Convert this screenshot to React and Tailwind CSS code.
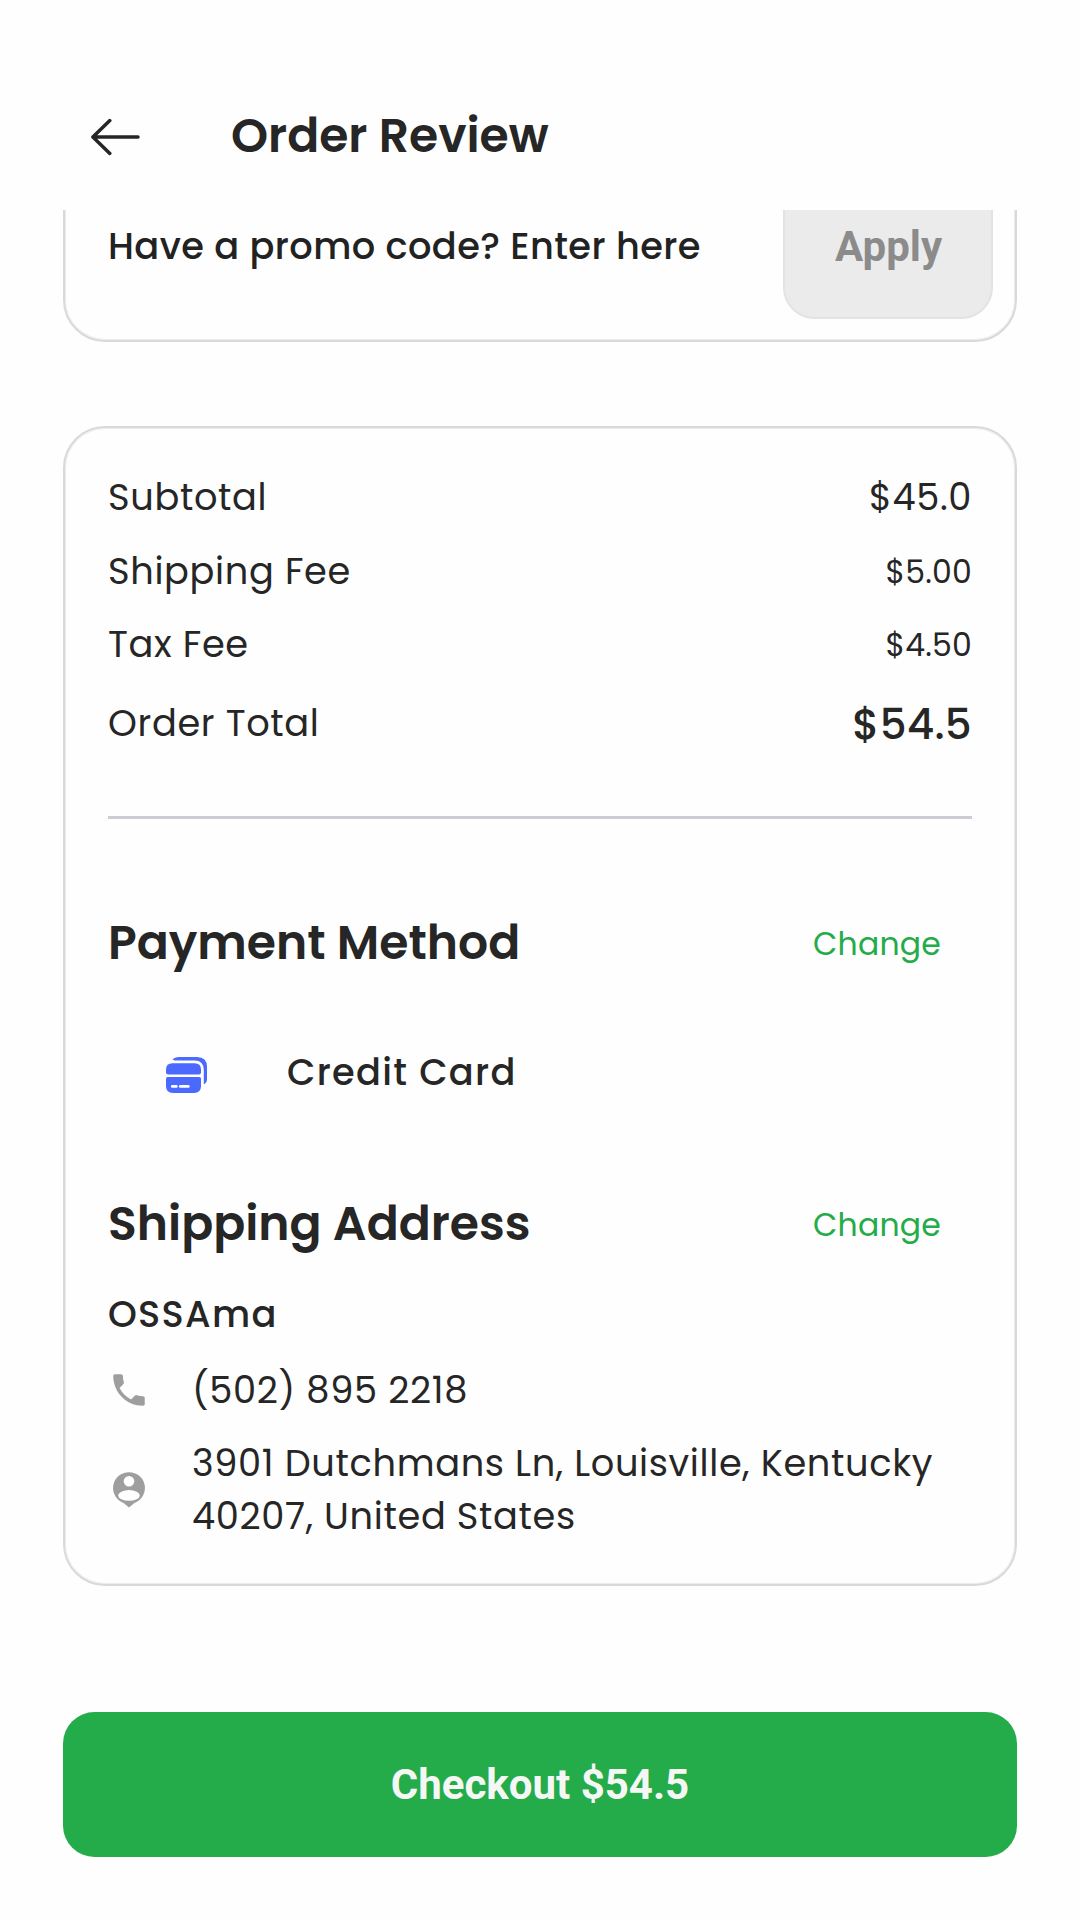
import { MdPhone } from "react-icons/md";

const fees = [
  { label: "Subtotal", value: "$45.0", row: "h-[74px]", style: "text-[36.75px] tracking-[0.65px]" },
  { label: "Shipping Fee", value: "$5.00", row: "h-[74px]", style: "text-[31.5px] tracking-[0.2px] pt-0.5" },
  { label: "Tax Fee", value: "$4.50", row: "h-[73px]", style: "text-[31.5px] tracking-[0.2px] pt-px" },
  { label: "Order Total", value: "$54.5", row: "h-[85px]", style: "text-[42px] font-medium tracking-[0.3px] pt-0.5" },
];

function ArrowLeft() {
  return (
    <svg className="h-[38px] w-[50px]" viewBox="0 0 50 38" fill="none" stroke="#262626" strokeWidth="3.5" strokeLinecap="round" strokeLinejoin="round">
      <path d="M18.8 2.6 1.9 19l16.9 16.4M2 19h45" />
    </svg>
  );
}

function CardsIcon() {
  return (
    <svg className="h-[36px] w-[41px]" viewBox="0 0 41 36" fill="#4b69ff">
      <path d="M6.5 2.8Q8.5 0 13 0H31Q41 0 41 10V22Q41 26 37.8 27.2V13Q37.8 3.4 28.5 3.4H9Q7.5 3.2 6.5 2.8Z" />
      <path d="M0 12.5Q0 6.2 6.5 6.2H28.5Q35 6.2 35 12.5V15.6Q35 17.4 33.2 17.4H1.8Q0 17.4 0 15.6Z" />
      <path d="M1.8 20H33.2Q35 20 35 21.8V29Q35 36 28 36H7Q0 36 0 29V21.8Q0 20 1.8 20Z" />
      <path d="M6.3 29.4h4M14.3 29.4h8" stroke="#fefefe" strokeWidth="2.8" strokeLinecap="round" />
    </svg>
  );
}

function PersonPinIcon() {
  return (
    <svg className="h-[36px] w-[32px]" viewBox="0 0 32 36" fill="#9e9e9e">
      <path d="M16 .2a15.8 15.8 0 0 1 5.4 30.7L16 35.4 10.6 30.9A15.8 15.8 0 0 1 16 .2Z" />
      <circle cx="16" cy="9.2" r="5.3" fill="#fefefe" />
      <ellipse cx="16" cy="23.4" rx="10.8" ry="5.3" fill="#fefefe" />
    </svg>
  );
}

function SectionHeading({ title }) {
  return (
    <div className="flex h-[81px] items-center justify-between">
      <h2 className="text-[47.25px] font-semibold">{title}</h2>
      <button className="mr-[31px] pt-1 text-[31.5px] tracking-[0.2px] text-[#24ab4a]">Change</button>
    </div>
  );
}

export default function App() {
  return (
    <div className="flex h-[1920px] w-[1080px] flex-col overflow-hidden bg-[#fefefe] font-['Poppins','Inter',sans-serif] leading-[53px] text-[#262626]">
      <header className="flex h-[210px] shrink-0 items-center pt-[61px] pl-[90.5px]">
        <div className="pt-[3px]">
          <ArrowLeft />
        </div>
        <h1 className="ml-[90.5px] text-[47.25px] font-semibold">Order Review</h1>
      </header>

      <main className="flex shrink-0 flex-col px-[63px]">
        <section className="flex h-[132px] flex-col justify-end overflow-hidden">
          <div className="flex h-[192px] shrink-0 items-center justify-between rounded-[42px] border-2 border-[#d9d9d9] pr-[22px] pl-[43px] shadow-[inset_0_0_0_1px_#ececec]">
            <span className="text-[36.75px] font-medium tracking-[0.4px] text-[#222222]">Have a promo code? Enter here</span>
            <button className="h-[145px] w-[210px] rounded-[31.5px] border-2 border-[#e3e3e3] bg-[#ebebeb] pl-px font-['Roboto',sans-serif] text-[42px] font-bold text-[#8b8b8b]">
              Apply
            </button>
          </div>
        </section>

        <section className="mt-[84px] h-[1160px] rounded-[42px] border-2 border-[#d9d9d9] px-[43px] pt-8 shadow-[inset_0_0_0_1px_#ececec]">
          {fees.map((fee) => (
            <div key={fee.label} className={`flex items-center justify-between ${fee.row}`}>
              <span className="text-[36.75px] tracking-[0.65px]">{fee.label}</span>
              <span className={fee.style}>{fee.value}</span>
            </div>
          ))}
          <div className="mt-[50px] h-[3px] bg-[#cdcbd4]" />

          <div className="mt-[83px]">
            <SectionHeading title="Payment Method" />
          </div>
          <div className="mt-[49px] flex h-20 items-center pl-[58px]">
            <div className="pt-[5px]">
              <CardsIcon />
            </div>
            <span className="ml-20 text-[36.75px] font-medium tracking-[1.3px]">Credit Card</span>
          </div>

          <div className="mt-[71px]">
            <SectionHeading title="Shipping Address" />
          </div>
          <p className="mt-[23px] h-[54px] text-[36.75px] leading-[54px] font-medium tracking-[1.3px]">OSSAma</p>
          <div className="mt-[22px] flex h-[54px] items-center">
            <MdPhone className="size-[42px] text-[#9e9e9e]" />
            <span className="ml-[42px] text-[36.75px] tracking-[0.65px]">(502) 895 2218</span>
          </div>
          <div className="mt-[19.5px] flex items-center pl-[4.5px]">
            <PersonPinIcon />
            <p className="ml-[47.5px] text-[36.75px] tracking-[0.65px]">
              3901 Dutchmans Ln, Louisville, Kentucky
              <br />
              40207, United States
            </p>
          </div>
        </section>

        <button className="mt-[126px] h-[145px] rounded-[31.5px] bg-[#24ab4a] font-['Roboto',sans-serif] text-[42px] font-bold text-[#f5f7f5]">
          Checkout $54.5
        </button>
      </main>
    </div>
  );
}
